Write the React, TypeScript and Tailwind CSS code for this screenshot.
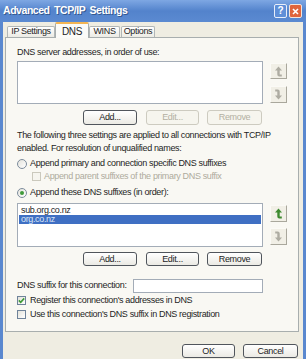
import React from "react";

const font = "font-['Liberation_Sans',Arial,sans-serif]";

const Btn = ({
  label,
  w,
  h = "h-[15px]",
  disabled = false,
}: {
  label: string;
  w: string;
  h?: string;
  disabled?: boolean;
}) => (
  <div
    className={`${w} ${h} flex items-center justify-center rounded-[3px] border text-[9px] leading-none ${
      disabled
        ? "border-[#cdcbc0] bg-[#f6f5ee] text-[#b3b0a2]"
        : "border-[#50555c] bg-linear-to-b from-white to-[#ebeae4] text-[#1e1e1e]"
    }`}
  >
    {label}
  </div>
);

const ArrowUp = ({ color }: { color: string }) => (
  <svg width="9" height="11" viewBox="0 0 9 11">
    <path d="M4.5 0.5 L1 4.5 H3.3 V8.5 Q3.3 10.5 5.3 10.5 H7.8 V8.4 H5.7 V4.5 H8 Z" fill={color} />
  </svg>
);

const ArrowDown = ({ color }: { color: string }) => (
  <svg width="9" height="11" viewBox="0 0 9 11">
    <path d="M4.5 10.5 L8 6.5 H5.7 V2.5 Q5.7 0.5 3.7 0.5 H1.2 V2.6 H3.3 V6.5 H1 Z" fill={color} />
  </svg>
);

const ArrowBtn = ({ children, h }: { children: React.ReactNode; h: string }) => (
  <div
    className={`w-[17px] ${h} flex items-center justify-center border border-t-[#fbfaf6] border-l-[#fbfaf6] border-r-[#a9a79c] border-b-[#a9a79c] bg-[#f1efe6]`}
  >
    {children}
  </div>
);

const Radio = ({ checked }: { checked?: boolean }) => (
  <div className="w-[10px] h-[10px] rounded-full border border-[#7d8c9c] bg-linear-to-br from-[#e4e3dc] to-white flex items-center justify-center">
    {checked && <div className="w-[4px] h-[4px] rounded-full bg-[#3f9a3a]" />}
  </div>
);

const Check = ({ checked, disabled }: { checked?: boolean; disabled?: boolean }) => (
  <div
    className={`w-[9px] h-[9px] border flex items-center justify-center ${
      disabled
        ? "border-[#cbc9bd] bg-[#f6f5ef]"
        : "border-[#6f839a] bg-linear-to-br from-[#e3e2da] to-white"
    }`}
  >
    {checked && (
      <svg width="7" height="7" viewBox="0 0 7 7">
        <path d="M0.8 3.4 L2.7 5.3 L6.2 1.4" stroke="#3e9a38" strokeWidth="1.6" fill="none" />
      </svg>
    )}
  </div>
);

const tabs = [
  { label: "IP Settings", w: "w-[48px]" },
  { label: "DNS", w: "w-[34px]", active: true },
  { label: "WINS", w: "w-[31px]" },
  { label: "Options", w: "w-[34px]" },
];

export default function App() {
  return (
    <div
      className={`${font} w-[306px] h-[359px] overflow-hidden bg-[#5a88cf] flex flex-col text-[#1e1e1e] tracking-[-0.35px]`}
    >
      {/* title bar */}
      <div className="h-[22px] flex items-center pl-[3px] pr-[4px] bg-linear-to-b from-[#7ea7e3] via-[#5383cc] to-[#5b8ad1]">
        <span className="text-white font-bold text-[10.5px] tracking-[-0.45px] [word-spacing:2px] [text-shadow:1px_1px_#34588f]">
          Advanced TCP/IP Settings
        </span>
        <div className="ml-auto flex gap-[2px]">
          <div className="w-[13px] h-[14px] rounded-[2px] border border-[#e8eefa] bg-[#5f8fd8] text-white text-[10px] font-bold leading-[12px] text-center tracking-normal">
            ?
          </div>
          <div className="w-[13px] h-[14px] rounded-[2px] border border-[#f3e4dc] bg-[#e0653d] flex items-center justify-center">
            <svg width="7" height="7" viewBox="0 0 7 7">
              <path d="M1 1 L6 6 M6 1 L1 6" stroke="white" strokeWidth="1.6" />
            </svg>
          </div>
        </div>
      </div>

      {/* body */}
      <div className="flex-1 mx-[3px] bg-[#efede2]">
        {/* tabs */}
        <div className="mt-[1px] ml-[4px] h-[14px] flex items-end gap-[1px]">
          {tabs.map((t) => (
            <div
              key={t.label}
              className={`${t.w} flex items-center justify-center rounded-t-[2px] border border-b-0 whitespace-nowrap ${
                t.active
                  ? "relative z-10 h-[16px] -mb-[1px] -mx-[1px] border-[#a8aeae] border-t-2 border-t-[#f3b553] bg-[#fbfbf8] text-[10px]"
                  : "h-[11px] border-[#b2b7b7] bg-linear-to-b from-white to-[#ecebe4] text-[9px]"
              }`}
            >
              {t.label}
            </div>
          ))}
        </div>

        {/* panel */}
        <div className="ml-[2px] w-[294px] h-[295px] border border-[#a8aeae] bg-[#f9f8f3] pl-[11px] pt-[8px] text-[9px] whitespace-nowrap">
          <div className="leading-[12px]">DNS server addresses, in order of use:</div>

          <div className="mt-[3px] flex">
            <div className="w-[246px] h-[43px] border border-[#a3acb7] bg-white" />
            <div className="ml-[7px] mt-[2px] flex flex-col gap-[7px]">
              <ArrowBtn h="h-[16px]">
                <ArrowUp color="#aeaca2" />
              </ArrowBtn>
              <ArrowBtn h="h-[17px]">
                <ArrowDown color="#aeaca2" />
              </ArrowBtn>
            </div>
          </div>

          <div className="mt-[6px] ml-[66px] flex">
            <Btn label="Add..." w="w-[54px]" />
            <div className="ml-[9px]">
              <Btn label="Edit..." w="w-[53px]" disabled />
            </div>
            <div className="ml-[8px]">
              <Btn label="Remove" w="w-[55px]" disabled />
            </div>
          </div>

          <div className="mt-[4px] leading-[13px]">
            The following three settings are applied to all connections with TCP/IP
            <br />
            enabled. For resolution of unqualified names:
          </div>

          <div className="mt-[2px] h-[13px] flex items-center">
            <Radio />
            <span className="ml-[3px]">Append primary and connection specific DNS suffixes</span>
          </div>
          <div className="h-[13px] flex items-center pl-[15px] text-[#aeab9d]">
            <Check disabled />
            <span className="ml-[3px]">Append parent suffixes of the primary DNS suffix</span>
          </div>
          <div className="mt-[3px] h-[13px] flex items-center">
            <Radio checked />
            <span className="ml-[3px]">Append these DNS suffixes (in order):</span>
          </div>

          <div className="mt-[4px] flex">
            <div className="w-[246px] h-[44px] border border-[#a3acb7] bg-white pt-[2px] px-[1px] leading-[9px]">
              <div className="pl-[2px]">sub.org.co.nz</div>
              <div className="pl-[2px] bg-[#3f6fc3] text-[#dce6f7]">org.co.nz</div>
            </div>
            <div className="ml-[7px] mt-[2px] flex flex-col gap-[6px]">
              <ArrowBtn h="h-[17px]">
                <ArrowUp color="#3d8a2e" />
              </ArrowBtn>
              <ArrowBtn h="h-[17px]">
                <ArrowDown color="#aeaca2" />
              </ArrowBtn>
            </div>
          </div>

          <div className="mt-[5px] ml-[66px] flex">
            <Btn label="Add..." w="w-[54px]" h="h-[14px]" />
            <div className="ml-[9px]">
              <Btn label="Edit..." w="w-[53px]" h="h-[14px]" />
            </div>
            <div className="ml-[8px]">
              <Btn label="Remove" w="w-[55px]" h="h-[14px]" />
            </div>
          </div>

          <div className="mt-[13px] flex items-center">
            <span className="w-[116px]">DNS suffix for this connection:</span>
            <div className="w-[130px] h-[14px] border border-[#a3acb7] bg-white" />
          </div>

          <div className="mt-[1px] h-[13px] flex items-center">
            <Check checked />
            <span className="ml-[4px]">Register this connection's addresses in DNS</span>
          </div>
          <div className="mt-[1px] h-[13px] flex items-center">
            <Check />
            <span className="ml-[4px]">Use this connection's DNS suffix in DNS registration</span>
          </div>
        </div>

        {/* footer */}
        <div className="mt-[12px] pr-[5px] flex justify-end gap-[8px]">
          <Btn label="OK" w="w-[53px]" h="h-[14px]" />
          <Btn label="Cancel" w="w-[55px]" h="h-[14px]" />
        </div>
      </div>
    </div>
  );
}
